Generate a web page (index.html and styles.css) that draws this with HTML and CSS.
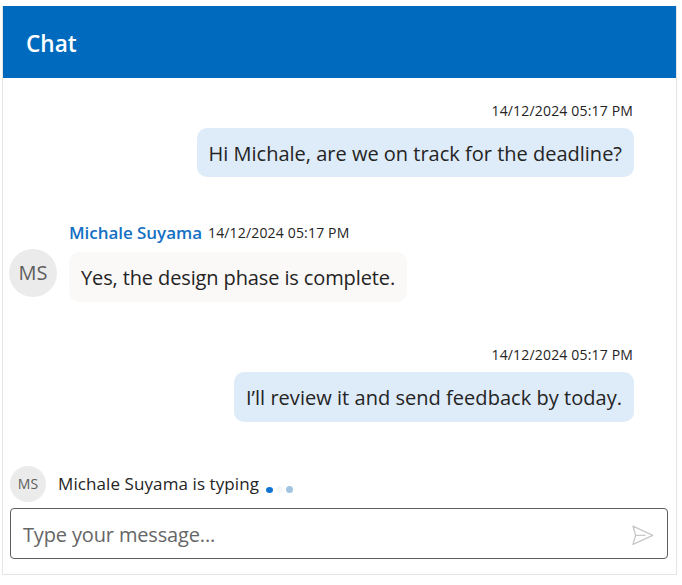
FILE: index.html
```html
<!DOCTYPE html>
<html lang="en">
<head>
<meta charset="utf-8">
<title>Chat</title>
<link rel="stylesheet" href="styles.css">
</head>
<body>
<main class="chat">
  <header class="chat-header">Chat</header>
  <section class="messages">
    <article class="message own">
      <div class="meta"><time>14/12/2024 05:17 PM</time></div>
      <p class="bubble">Hi Michale, are we on track for the deadline?</p>
    </article>
    <article class="message incoming">
      <span class="avatar">MS</span>
      <div class="content">
        <div class="meta"><span class="author">Michale Suyama</span><time>14/12/2024 05:17 PM</time></div>
        <p class="bubble tight">Yes, the design phase is complete.</p>
      </div>
    </article>
    <article class="message own">
      <div class="meta"><time>14/12/2024 05:17 PM</time></div>
      <p class="bubble loose">I’ll review it and send feedback by today.</p>
    </article>
  </section>
  <div class="typing">
    <span class="avatar small">MS</span>
    <span class="typing-text">Michale Suyama is typing</span>
    <span class="dots"><i class="dot active"></i><i class="dot faint"></i><i class="dot soft"></i></span>
  </div>
  <div class="composer">
    <span class="placeholder">Type your message...</span>
    <svg class="send" viewBox="0 0 24 22" fill="none" stroke="#c8c8c8" stroke-width="1.3" stroke-linejoin="round" stroke-linecap="round"><path d="M2 2.2 21.8 11.3 2 20.4 4.6 11.3ZM4.6 11.3H14"/></svg>
  </div>
</main>
</body>
</html>
```
FILE: styles.css
```css
* { box-sizing: border-box; }
body {
  margin: 0;
  background: #fff;
  color: #242424;
  font-family: "Open Sans", sans-serif;
}
.chat {
  width: 675px;
  height: 569px;
  margin: 6px 0 0 2px;
  border: 1px solid #e4e4e4;
  border-top: 0;
  display: flex;
  flex-direction: column;
}
.chat-header {
  height: 72px;
  padding-left: 23px;
  background: #006bbe;
  color: #fff;
  font-size: 22.6px;
  font-weight: 600;
  line-height: 75px;
}
.messages {
  height: 388px;
  padding: 22px 42px 0 6px;
  display: flex;
  flex-direction: column;
}
.message.own {
  display: flex;
  flex-direction: column;
  align-items: flex-end;
}
.message.incoming {
  display: flex;
  align-items: flex-start;
  gap: 12px;
  margin: 44px 0 42px;
}
.meta {
  display: flex;
  align-items: center;
  gap: 6px;
  height: 28px;
  padding-bottom: 6px;
  font-size: 14px;
  letter-spacing: 0.17px;
  line-height: 22px;
}
.own .meta { padding-right: 1px; }
.incoming .meta { height: 31px; padding-bottom: 8px; }
.author {
  color: #1470c4;
  font-size: 17px;
  font-weight: 600;
  letter-spacing: -0.05px;
}
.bubble {
  height: 49px;
  margin: 0;
  padding: 0 12px;
  border-radius: 10px;
  background: #deebf8;
  font-size: 20px;
  line-height: 51px;
  white-space: nowrap;
}
.incoming .bubble { height: 50px; background: #faf9f8; }
.bubble.tight { letter-spacing: -0.12px; }
.bubble.loose { height: 50px; letter-spacing: 0.035px; }
.avatar {
  flex: none;
  width: 48px;
  height: 48px;
  margin-top: 28px;
  border-radius: 50%;
  background: #ebebeb;
  color: #605e5c;
  font-size: 20px;
  line-height: 48px;
  text-align: center;
}
.avatar.small {
  width: 36px;
  height: 36px;
  margin: 0;
  font-size: 14px;
  line-height: 36px;
}
.typing {
  display: flex;
  align-items: center;
  height: 36px;
  padding-left: 7px;
}
.typing-text {
  margin: -2px 0 0 12px;
  font-size: 17px;
  letter-spacing: 0.09px;
}
.dots {
  display: flex;
  gap: 3px;
  margin: 11px 0 0 7px;
}
.dot {
  width: 7px;
  height: 7px;
  border-radius: 50%;
}
.dot.active { height: 6px; margin-top: 1px; background: #0f74d1; }
.dot.faint { background: #f6f9fc; }
.dot.soft { background: #a3c3e2; }
.composer {
  display: flex;
  align-items: center;
  justify-content: space-between;
  height: 51px;
  margin: 6px 8px 0 7px;
  padding: 0 12px;
  border: 1px solid #605e5c;
  border-radius: 4px;
}
.placeholder {
  margin-top: 2px;
  color: #666;
  font-size: 20px;
  letter-spacing: -0.15px;
  line-height: 49px;
}
.send {
  width: 24px;
  height: 22px;
  margin-top: 3px;
}
```
